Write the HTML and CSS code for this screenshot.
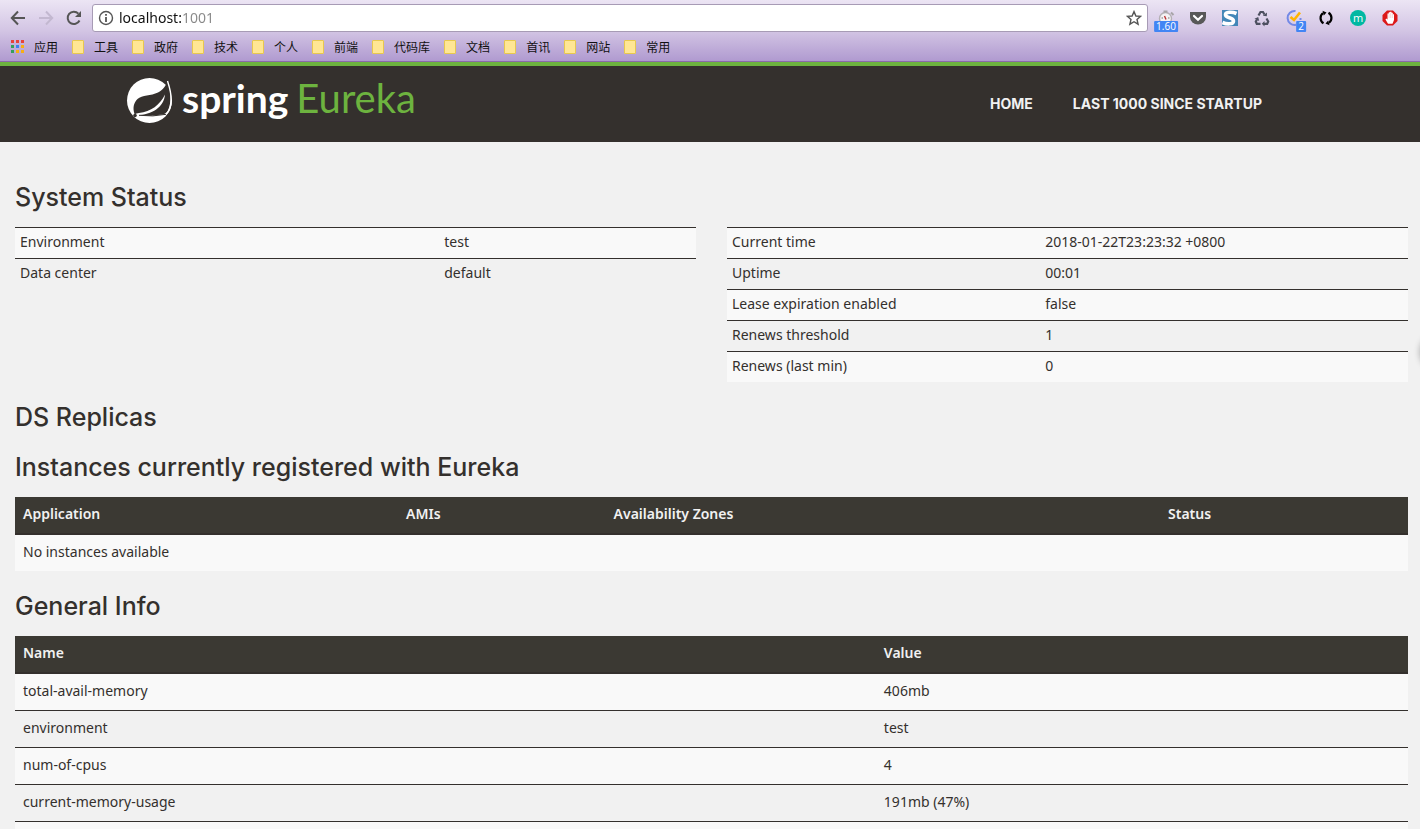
FILE: index.html
```html
<!DOCTYPE html>
<html lang="en">
<head>
<meta charset="utf-8">
<title>Eureka</title>
<link rel="stylesheet" href="styles.css">
</head>
<body>
<div class="browser">
  <div class="toolbar">
    <div class="nav-buttons">
      <button class="icon-button" type="button" aria-label="Back"><svg width="16" height="16" viewBox="0 0 16 16" fill="none" stroke="#555" stroke-width="2"><path d="M15 8H2M8 1.500L1.800 8L8 14.500"/></svg></button>
      <button class="icon-button" type="button" aria-label="Forward"><svg width="16" height="16" viewBox="0 0 16 16" fill="none" stroke="#c3b8d0" stroke-width="2"><path d="M1 8H14M8 1.500L14.200 8L8 14.500"/></svg></button>
      <button class="icon-button" type="button" aria-label="Reload"><svg width="16" height="16" viewBox="0 0 16 16" fill="none" stroke="#555" stroke-width="2"><path d="M13.500 10.500A6.200 6.200 0 1 1 12.400 3.600"/><path d="M15 1V7H9Z" fill="#555" stroke="none"/></svg></button>
    </div>
    <div class="address">
      <svg width="16" height="16" viewBox="0 0 16 16" fill="none" stroke="#555"><circle cx="8" cy="8" r="6.500" stroke-width="1.400"/><path d="M8 7V12M8 4V5.700" stroke-width="1.800"/></svg>
      <input class="address-input" type="text" value="localhost:1001" aria-label="Address">
      <button class="icon-button" type="button" aria-label="Bookmark this page"><svg width="16" height="16" viewBox="0 0 16 16" fill="none" stroke="#555" stroke-width="1.400"><path d="M8 1.600L9.900 6L14.600 6.400L11 9.500L12.100 14.200L8 11.700L3.900 14.200L5 9.500L1.400 6.400L6.100 6Z"/></svg></button>
    </div>
    <div class="extensions">
      <button class="extension" type="button" aria-label="Speed"><svg width="18" height="18" viewBox="0 0 18 18"><circle cx="8.500" cy="9.500" r="6" fill="#f4f2f4" stroke="#b5b0b5" stroke-width="1.400"/><path d="M6.500 2.500H10.500M14 3.500L16.500 6" stroke="#a8a4a8" stroke-width="2" fill="none"/><path d="M7.500 7L9 10.500" stroke="#b33" stroke-width="1.400"/><path d="M4.500 9H6M11 9H12.500" stroke="#777"/></svg><span class="badge">1.60</span></button>
      <button class="extension" type="button" aria-label="Pocket"><svg width="18" height="18" viewBox="0 0 18 18"><path d="M1 3H17V8A8 7.500 0 0 1 1 8Z" fill="#585858"/><path d="M5 7L9 10.800L13 7" fill="none" stroke="#fff" stroke-width="2.200" stroke-linecap="round"/></svg></button>
      <button class="extension" type="button" aria-label="Stylish"><svg width="18" height="18" viewBox="0 0 18 18"><path d="M1 1H17V17H1Z" fill="#4387b8"/><path d="M15.500 4.500C11 2.500 4.500 2.800 4.500 5.800C4.500 9.300 12.500 8.300 12.500 12C12.500 15.500 6 15.500 1.500 13.500" fill="none" stroke="#fff" stroke-width="3.600"/></svg></button>
      <button class="extension" type="button" aria-label="Recycle"><svg width="18" height="18" viewBox="0 0 18 18" fill="none" stroke="#4d5060" stroke-width="2.200"><path d="M5.500 6.500L7.500 3H10L11.500 5.500M13.500 9.500L15.200 12.500L14.200 14.800H11M7.500 14.800H3.800L2.800 12.500L4 10.500"/><path d="M9.800 6.800L13.800 7.200L14 3.500ZM11.500 12V17.500L8.800 14.800ZM1.500 9.800L5.200 8L6.200 12Z" fill="#4d5060" stroke="none"/></svg></button>
      <button class="extension" type="button" aria-label="Tasks"><svg width="18" height="18" viewBox="0 0 18 18" fill="none"><path d="M10.500 2A7 7 0 1 0 11 15.800M15.500 9V11" stroke="#7389e6" stroke-width="2"/><path d="M5.500 8L9 11L15 3.500" stroke="#ffb400" stroke-width="2.600"/></svg><span class="badge">2</span></button>
      <button class="extension" type="button" aria-label="Sync"><svg width="18" height="18" viewBox="0 0 18 18" fill="none" stroke="#000" stroke-width="2.200"><path d="M6.500 14.200A6 6 0 0 1 6 4.200M11.500 3.800A6 6 0 0 1 12 13.800"/><path d="M5.500 1.800L9.500 3.500L6.800 6.500ZM12.500 16.200L8.500 14.500L11.200 11.500Z" fill="#000" stroke="none"/></svg></button>
      <button class="extension" type="button" aria-label="Account"><span class="round">m</span></button>
      <button class="extension" type="button" aria-label="Ad blocker"><svg width="18" height="18" viewBox="0 0 18 18"><path d="M6 1.500H12L16.500 6V12L12 16.500H6L1.500 12V6Z" fill="#dc1919"/><path d="M7 14.800L4.500 10.500L5.200 9.500L6.500 10.500V4.500H7.800V3.200H9.200V2.800H10.500V3.800H11.800V5.200H13V11L11.500 14.800Z" fill="#fff"/><path d="M8 5V9M9.700 4V9M11.400 5V9" stroke="#f0b0b0" stroke-width="0.500"/></svg></button>
    </div>
  </div>
  <nav class="bookmarks" aria-label="Bookmarks">
    <a class="bookmark" href="#"><svg width="14" height="14" viewBox="0 0 14 14"><path d="M1 0H4V3H1ZM6 0H9V3H6ZM11 0H14V3H11Z" fill="#e8423a"/><path d="M1 5H4V8H1ZM1 10H4V13H1Z" fill="#35a05a"/><path d="M6 5H9V8H6Z" fill="#3b82f0"/><path d="M11 5H14V8H11ZM6 10H9V13H6ZM11 10H14V13H11Z" fill="#f7ae13"/></svg>应用</a>
    <a class="bookmark" href="#"><span class="folder"></span>工具</a>
    <a class="bookmark" href="#"><span class="folder"></span>政府</a>
    <a class="bookmark" href="#"><span class="folder"></span>技术</a>
    <a class="bookmark" href="#"><span class="folder"></span>个人</a>
    <a class="bookmark" href="#"><span class="folder"></span>前端</a>
    <a class="bookmark" href="#"><span class="folder"></span>代码库</a>
    <a class="bookmark" href="#"><span class="folder"></span>文档</a>
    <a class="bookmark" href="#"><span class="folder"></span>首讯</a>
    <a class="bookmark" href="#"><span class="folder"></span>网站</a>
    <a class="bookmark" href="#"><span class="folder"></span>常用</a>
  </nav>
</div>

<header class="site-header">
  <div class="container">
    <a class="brand" href="#">
      <svg class="brand-mark" width="48" height="48" viewBox="0 0 48 48">
        <circle cx="24.500" cy="24.500" r="22.500" fill="#fff"/>
        <path d="M42.500 3L49 3V24L46.500 24C46.500 17 44 10 42.500 3Z" fill="#34302d"/>
        <path d="M42.500 4C41 10 38 14 33 16.500C26 20 17 19 12.500 23C8.500 27 7.500 32 9.500 38C20 40.500 32 40 41 37.500C47 30 46.500 17 42.500 4Z" fill="#34302d"/>
        <path d="M42.500 5C45.500 14 48 24 45 32C44 35 42 37.500 40 38.500" fill="none" stroke="#fff" stroke-width="1.400"/>
        <path d="M40 18.500C39 31 27 39 12 39C9 39 10 37.500 14 37C26 35.500 35 29 40 18.500Z" fill="#fff"/>
        <path d="M14 39.300Q28 41 41 38.300" fill="none" stroke="#34302d" stroke-width="1"/>
        <circle cx="10" cy="39.500" r="1.800" fill="#34302d"/>
      </svg>
      <span class="brand-spring">spring</span>
      <span class="brand-name">Eureka</span>
    </a>
    <nav class="menu" aria-label="Main">
      <a href="#">HOME</a>
      <a href="#">LAST 1000 SINCE STARTUP</a>
    </nav>
  </div>
</header>

<main class="content">
  <h1>System Status</h1>
  <div class="status">
    <table class="compact">
      <colgroup><col class="environment-name"><col></colgroup>
      <tr><td>Environment</td><td>test</td></tr>
      <tr><td>Data center</td><td>default</td></tr>
    </table>
    <table class="compact">
      <colgroup><col class="runtime-name"><col></colgroup>
      <tr><td>Current time</td><td>2018-01-22T23:23:32 +0800</td></tr>
      <tr><td>Uptime</td><td>00:01</td></tr>
      <tr><td>Lease expiration enabled</td><td>false</td></tr>
      <tr><td>Renews threshold</td><td>1</td></tr>
      <tr><td>Renews (last min)</td><td>0</td></tr>
    </table>
  </div>
  <h1>DS Replicas</h1>
  <h1>Instances currently registered with Eureka</h1>
  <table class="listing">
    <colgroup><col class="application"><col class="amis"><col class="zones"><col></colgroup>
    <thead><tr><th>Application</th><th>AMIs</th><th>Availability Zones</th><th>Status</th></tr></thead>
    <tbody><tr><td colspan="4">No instances available</td></tr></tbody>
  </table>
  <h1>General Info</h1>
  <table class="listing">
    <colgroup><col class="info-name"><col></colgroup>
    <thead><tr><th>Name</th><th>Value</th></tr></thead>
    <tbody>
      <tr><td>total-avail-memory</td><td>406mb</td></tr>
      <tr><td>environment</td><td>test</td></tr>
      <tr><td>num-of-cpus</td><td>4</td></tr>
      <tr><td>current-memory-usage</td><td>191mb (47%)</td></tr>
      <tr><td></td><td></td></tr>
    </tbody>
  </table>
</main>
<div class="edge-handle"></div>
</body>
</html>
```
FILE: styles.css
```css
* { box-sizing: border-box; }

body {
  margin: 0;
  height: 100vh;
  overflow: hidden;
  display: flex;
  flex-direction: column;
  background: #f1f1f1;
  color: #34302d;
  font: 14px/20px "Noto Sans", sans-serif;
}

a { color: inherit; text-decoration: none; }
svg { display: block; flex: none; }
button { border: 0; padding: 0; background: none; font: inherit; }

/* Browser bar */
.browser {
  flex: none;
  background: linear-gradient(#ece5f4, #d3c5e4 50%, #b09ad0);
  border-bottom: 1px solid #8a6ba8;
}
.toolbar {
  display: flex;
  align-items: center;
  height: 36px;
  padding: 0 21px 0 10px;
}
.nav-buttons { display: flex; gap: 12px; margin-right: 10px; }
.icon-button { width: 16px; height: 16px; }
.address {
  flex: 1;
  display: flex;
  align-items: center;
  gap: 5px;
  height: 28px;
  padding: 0 5px;
  background: #fff;
  border: 1px solid #a79bb5;
  border-radius: 3px;
}
.address-input {
  flex: 1;
  border: 0;
  padding: 0;
  outline: 0;
  font: 14px/20px "Noto Sans", sans-serif;
  color: transparent;
  background: linear-gradient(90deg, #111 62px, #888 62px);
  -webkit-background-clip: text;
  background-clip: text;
}
.extensions { display: flex; gap: 14px; margin-left: 9px; }
.extension { position: relative; width: 18px; height: 18px; }
.badge {
  position: absolute;
  left: 50%;
  top: 12px;
  transform: translateX(-50%);
  padding: 0 2px;
  background: #4285f4;
  color: #fff;
  border-radius: 1px;
  font: 10px/11px "Open Sans", sans-serif;
}
.extension:nth-child(5) .badge { left: 16px; }
.round {
  display: block;
  width: 16px;
  height: 16px;
  margin: 1px;
  border-radius: 50%;
  background: #00b8a2;
  color: #fff;
  font: 11px/15px "Open Sans", sans-serif;
}

.bookmarks {
  display: flex;
  align-items: center;
  gap: 14px;
  height: 25px;
  padding: 0 10px 3px;
  color: #111;
  font: 12px/20px "Noto Sans CJK SC", sans-serif;
}
.bookmark { display: flex; align-items: center; gap: 10px; }
.folder {
  width: 12px;
  height: 14px;
  background: #ffe694;
  border: 1px solid #e8c84e;
  border-radius: 1px;
}

/* Site header */
.site-header {
  flex: none;
  background: #34302d;
  border-top: 4px solid #6db33f;
}
.container {
  display: flex;
  justify-content: space-between;
  align-items: center;
  max-width: 1170px;
  height: 76px;
  margin: 0 auto;
  padding: 0 13px 0 0;
}
.brand {
  display: flex;
  align-items: center;
  margin-bottom: 8px;
  font: 40px/44px Lato, sans-serif;
}
.brand-mark { margin-right: 9px; }
.brand-spring {
  margin-right: 8px;
  padding-bottom: 4px;
  color: #fff;
  font-size: 39px;
  font-weight: 700;
}
.brand-name { padding-bottom: 4px; color: #6db33f; }
.menu {
  display: flex;
  color: #f1f1f1;
  font: 700 14px/20px Inter, sans-serif;
}
.menu a { padding: 0 20px; }

/* Content */
.content {
  flex: 1;
  min-height: 0;
  overflow: hidden;
  padding: 20px 12px 0 15px;
}
h1 {
  margin: 20px 0 15px;
  font: 500 25px/30px Inter, sans-serif;
}
.status {
  display: grid;
  grid-template-columns: 1fr 1fr;
  align-items: start;
  gap: 31px;
}
table {
  width: 100%;
  table-layout: fixed;
  border-spacing: 0;
}
td, th { text-align: left; }
td { border-top: 1px solid #34302d; }
tr:nth-child(odd) td { background: #f9f9f9; }
.compact td { padding: 4px 5px 6px; }
.listing td { padding: 7px 8px 9px; }
.listing tbody tr:first-child td { border-top: 0; }
.listing th {
  padding: 7px 8px 9px;
  background: #3b3933;
  color: #f1f1f1;
  border-bottom: 2px solid #34302d;
  font-weight: 600;
}
.listing td:empty { height: 37px; }
.environment-name { width: 62.3%; }
.runtime-name { width: 46%; }
.application { width: 27.5%; }
.amis { width: 14.9%; }
.zones { width: 39.8%; }
.info-name { width: 61.8%; }

.edge-handle {
  position: absolute;
  top: 334px;
  left: 100%;
  width: 36px;
  height: 36px;
  border-radius: 50%;
  box-shadow: 0 0 6px rgba(0, 0, 0, 0.3);
}
```
